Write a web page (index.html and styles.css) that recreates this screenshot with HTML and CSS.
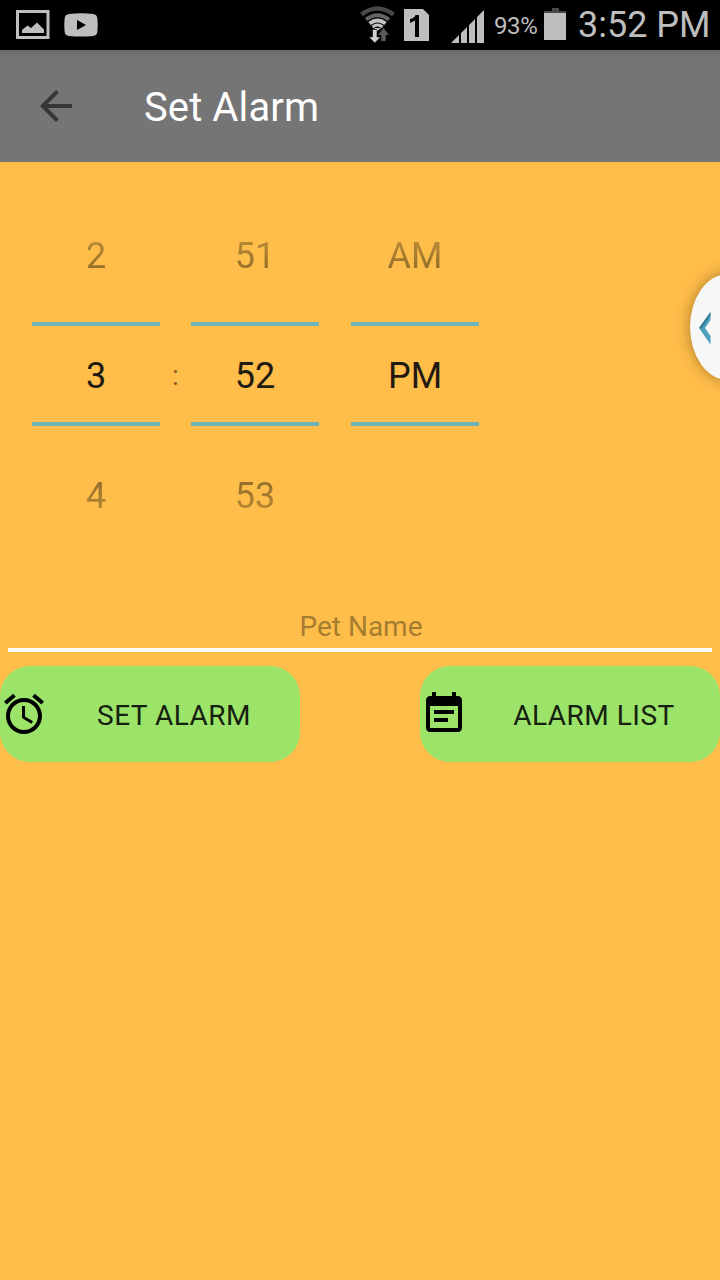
FILE: index.html
```html
<!DOCTYPE html>
<html lang="en">
<head>
<meta charset="utf-8">
<title>Set Alarm</title>
<link rel="stylesheet" href="styles.css">
</head>
<body>
<div class="screen">
  <div class="status-bar">
    <div class="status-left">
      <svg class="icon-picture" width="34" height="30" viewBox="0 0 34 30"><rect x="1.500" y="1.500" width="30.500" height="26" fill="none" stroke="#bebebe" stroke-width="3"/><path d="M6 23v-3l5.500-4.500 3.500 2.500 6-5.500 7 7V23z" fill="#bebebe"/></svg>
      <svg class="icon-video" width="34" height="24" viewBox="0 0 34 24"><path d="M5 1Q17-.5 29 1q4 .5 4.300 4 .8 7 0 14-.3 3.500-4.300 4-12 1.200-24 0-4-.5-4.300-4-.8-7 0-14Q1 1.500 5 1z" fill="#bebebe"/><path d="M13 7v10l9-5z" fill="#000"/></svg>
    </div>
    <div class="status-right">
      <svg class="icon-wifi" width="36" height="37" viewBox="0 0 36 37"><g fill="none"><path d="M1.500 8.500Q17.500-3.500 33.500 8.500" stroke="#484848" stroke-width="4.500"/><path d="M6 13.500Q17.500 5 29 13.500" stroke="#646464" stroke-width="4"/><path d="M9.500 17.500Q17.500 11.500 25.500 17.500" stroke="#c0c0c0" stroke-width="4"/><path d="M12.500 21Q17.500 17 22.500 21" stroke="#c0c0c0" stroke-width="3"/></g><path d="M14 22h7l-3.500 3z" fill="#c0c0c0"/><path d="M12.500 23.500h4.500V31h3.500L14.800 37 9 31h3.500z" fill="#d0d0d0" stroke="#000" stroke-width=".5"/><path d="M23.500 22l5.500 7h-3.300v6h-4.400v-6H18z" fill="#5a5a5a"/></svg>
      <svg class="icon-sim" width="25" height="32" viewBox="0 0 25 32"><path d="M0 0h19l6 6v26H0z" fill="#bebebe"/><path d="M11.500 6H15v22h-4V11.500L6 14v-4q4.500-1 5.500-4z" fill="#000"/></svg>
      <svg class="icon-signal" width="33" height="33" viewBox="0 0 33 33"><path d="M0 33l8-8v8zM10 33V23l6-6v16zM18 33V15l6-6v24zM26 33V7l7-7v33z" fill="#bebebe"/></svg>
      <span class="battery-text">93%</span>
      <svg class="icon-battery" width="22" height="32" viewBox="0 0 22 32"><path d="M0 3h8V0h7v3h7v3H0z" fill="#484848"/><path d="M0 5h22v27H0z" fill="#bebebe"/></svg>
      <span class="clock">3:52 PM</span>
    </div>
  </div>

  <div class="app-bar">
    <svg width="32" height="32" viewBox="4 4 16 16"><path d="M20 11H7.830l5.590-5.590L12 4l-8 8 8 8 1.410-1.410L7.830 13H20z" fill="#363636"/></svg>
    <h1 class="title">Set Alarm</h1>
  </div>

  <div class="time-picker">
    <div class="wheel">
      <div class="option before">2</div>
      <div class="option selected">3</div>
      <div class="option after">4</div>
    </div>
    <div class="divider">:</div>
    <div class="wheel">
      <div class="option before">51</div>
      <div class="option selected">52</div>
      <div class="option after">53</div>
    </div>
    <div class="wheel period">
      <div class="option before">AM</div>
      <div class="option selected">PM</div>
    </div>
  </div>

  <div class="name-field">Pet Name</div>

  <div class="actions">
    <div class="button">
      <svg width="48" height="48" viewBox="0 0 24 24"><path d="M22 5.720l-4.600-3.860-1.290 1.530 4.600 3.860L22 5.720zM7.880 3.390L6.600 1.860 2 5.710l1.290 1.530 4.590-3.850zM12.500 8H11v6l4.750 2.850.75-1.230-4-2.370V8zM12 4c-4.970 0-9 4.030-9 9s4.020 9 9 9c4.970 0 9-4.030 9-9s-4.030-9-9-9zm0 16c-3.870 0-7-3.130-7-7s3.130-7 7-7 7 3.130 7 7-3.130 7-7 7z"/></svg>
      <span class="label">SET ALARM</span>
    </div>
    <div class="button">
      <svg width="48" height="48" viewBox="0 0 24 24"><path d="M17 10H7v2h10v-2zm2-7h-1V1h-2v2H8V1H6v2H5c-1.110 0-1.990.9-1.990 2L3 19c0 1.100.89 2 2 2h14c1.100 0 2-.9 2-2V5c0-1.100-.9-2-2-2zm0 16H5V8h14v11zm-5-5H7v2h7v-2z"/></svg>
      <span class="label">ALARM LIST</span>
    </div>
  </div>

  <div class="edge-handle">
    <svg width="12" height="33" viewBox="0 0 12 33"><path d="M11.500 0v8L6 16l5.500 8v8.500L0 16z" fill="#4c9fbd"/><path d="M11.500 0v3L2.500 16.500 0 16z" fill="#327b93"/></svg>
  </div>
</div>
</body>
</html>
```
FILE: styles.css
```css
* { box-sizing: border-box; }
body { margin: 0; font-family: Roboto, "Liberation Sans", sans-serif; }
svg { display: block; flex: none; }

.screen {
  position: relative;
  display: flex;
  flex-direction: column;
  width: 720px;
  height: 1280px;
  overflow: hidden;
  background: #ffbe4a;
}

.status-bar {
  display: flex;
  justify-content: space-between;
  height: 50px;
  background: #000;
  color: #bebebe;
}
.status-left, .status-right { display: flex; align-items: flex-start; }
.status-left { padding-left: 16px; }
.icon-picture { margin-top: 10px; }
.icon-video { margin: 13px 0 0 14px; }
.status-right { padding-right: 11px; white-space: nowrap; }
.icon-wifi { margin: 6px 8px 0 0; }
.icon-sim { margin: 9px 22px 0 0; }
.icon-signal { margin: 10px 10px 0 0; }
.battery-text { width: 43px; margin-right: 7px; font-size: 24px; letter-spacing: -0.4px; line-height: 52px; }
.icon-battery { margin: 8px 12px 0 0; }
.clock { width: 131px; font-size: 36px; line-height: 50px; }

.app-bar {
  display: flex;
  align-items: center;
  gap: 72px;
  height: 112px;
  padding-left: 40px;
  background: linear-gradient(#6b6b6b, #757575 8px);
}
.title { margin: 0; padding-top: 4px; color: #fff; font-size: 40px; font-weight: 400; letter-spacing: 0.1px; line-height: 48px; }

.time-picker { display: flex; height: 436px; padding: 28px 0 0 32px; }
.wheel { width: 128px; }
.period { margin-left: 32px; }
.option { font-size: 36px; text-align: center; }
.before, .after {
  color: transparent;
  -webkit-background-clip: text;
  background-clip: text;
}
.before {
  height: 132px;
  line-height: 132px;
  background-image: linear-gradient(transparent 0, rgba(0, 0, 0, .7) 132px);
}
.selected {
  height: 104px;
  padding-top: 2px;
  border-top: 4px solid #6cb5b8;
  border-bottom: 4px solid #6cb5b8;
  color: #1f1a12;
  line-height: 96px;
}
.after {
  height: 140px;
  line-height: 140px;
  background-image: linear-gradient(rgba(0, 0, 0, .7) 0, transparent 140px);
}
.divider { width: 31px; padding-top: 133px; color: #826126; font-size: 28px; line-height: 106px; text-align: center; }

.name-field {
  height: 54px;
  margin: 0 8px;
  padding-left: 2px;
  border-bottom: 4px solid #fff;
  color: #a67c31;
  font-size: 28px;
  line-height: 58px;
  text-align: center;
}

.actions { display: flex; justify-content: space-between; margin-top: 14px; }
.button {
  display: flex;
  align-items: center;
  width: 300px;
  height: 96px;
  border-radius: 30px;
  background: #9be369;
}
.label {
  flex: 1;
  padding-top: 2px;
  color: #16200f;
  font-size: 28px;
  letter-spacing: 0.5px;
  text-align: center;
  white-space: nowrap;
}

.edge-handle {
  position: absolute;
  top: 274px;
  left: 690px;
  width: 76px;
  height: 106px;
  padding: 38px 0 0 9px;
  border-radius: 50%;
  background: #f7f7f7;
  box-shadow: 0 0 14px rgba(80, 50, 0, .5);
}
```
